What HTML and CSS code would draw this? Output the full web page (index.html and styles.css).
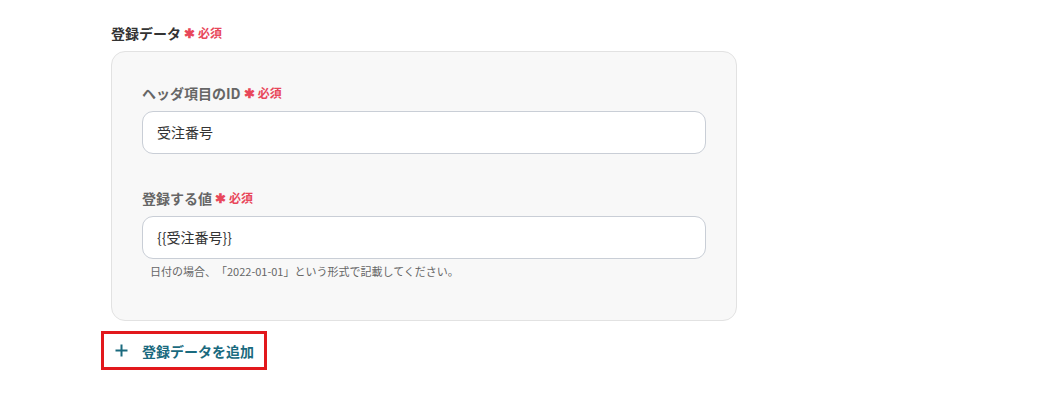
FILE: index.html
```html
<!DOCTYPE html>
<html lang="ja">
<head>
<meta charset="utf-8">
<link rel="stylesheet" href="styles.css">
</head>
<body>
<div class="page">
  <div class="section-label">登録データ<span class="req"><span class="star">✱</span>必須</span></div>
  <div class="card">
    <div class="field">
      <div class="field-label">ヘッダ項目のID<span class="req"><span class="star">✱</span>必須</span></div>
      <div class="input">受注番号</div>
    </div>
    <div class="field second">
      <div class="field-label">登録する値<span class="req"><span class="star">✱</span>必須</span></div>
      <div class="input">{{受注番号}}</div>
      <div class="help">日付の場合、「2022-01-01」という形式で記載してください。</div>
    </div>
  </div>
  <div class="add-btn">
    <svg class="plus" width="13" height="13" viewBox="0 0 13 13"><path d="M6.5 0.5v12M0.5 6.5h12" stroke="#1a6a7e" stroke-width="2" fill="none"/></svg>
    <span class="add-text">登録データを追加</span>
  </div>
</div>
</body>
</html>
```
FILE: styles.css
```css
html, body {
  margin: 0;
  padding: 0;
  background: #ffffff;
}
body {
  font-family: "Noto Sans CJK JP", "Noto Sans", sans-serif;
  color: #333333;
  text-spacing-trim: space-all;
}
.page {
  padding: 23px 0 0 111px;
}
.section-label {
  font-size: 14px;
  font-weight: 700;
  line-height: 20px;
  color: #333333;
  display: flex;
  align-items: center;
}
.req {
  display: inline-flex;
  align-items: center;
  color: #e8475a;
  font-size: 12px;
  font-weight: 700;
  margin-left: 3px;
}
.star {
  font-size: 13px;
  margin-right: 3px;
}
.card {
  margin-top: 8px;
  width: 564px;
  background: #f8f8f8;
  border: 1px solid #e2e2e2;
  border-radius: 14px;
  padding: 31px 30px 41px 30px;
}
.field-label {
  font-size: 14px;
  font-weight: 700;
  line-height: 20px;
  color: #666666;
  display: flex;
  align-items: center;
  margin-bottom: 8px;
}
.second {
  margin-top: 34px;
}
.input {
  box-sizing: border-box;
  height: 43px;
  border: 1px solid #c9ced6;
  border-radius: 11px;
  background: #ffffff;
  padding: 0 14px;
  font-size: 14px;
  line-height: 41px;
  color: #333333;
}
.help {
  font-size: 11px;
  line-height: 16px;
  color: #666666;
  margin-top: 4px;
  padding-left: 8px;
}
.add-btn {
  display: inline-flex;
  align-items: center;
  margin-top: 10px;
  margin-left: -10px;
  height: 33px;
  border: 3px solid #e2181c;
  padding: 0 10px 0 11px;
}
.plus {
  display: block;
  margin-right: 14px;
}
.add-text {
  font-size: 14px;
  font-weight: 700;
  color: #1a6a7e;
  line-height: 20px;
}
```
